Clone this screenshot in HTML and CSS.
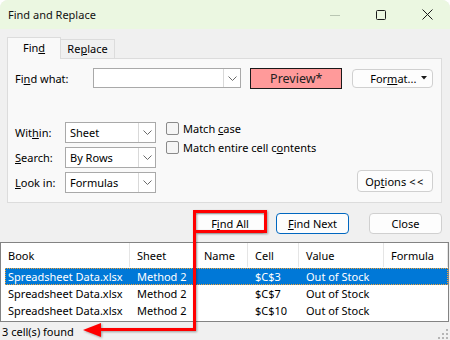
FILE: index.html
```html
<!DOCTYPE html>
<html>
<head>
<meta charset="utf-8">
<title>Find and Replace</title>
<link rel="stylesheet" href="styles.css">
</head>
<body>
<div class="window">
  <div class="titlebar">
    <span class="title">Find and Replace</span>
    <div class="controls">
      <span class="cap"><svg width="10" height="10" viewBox="0 0 10 10"><line x1="0" y1="5.5" x2="10" y2="5.5" stroke="#b9c6b3" stroke-width="1"/></svg></span>
      <span class="cap"><svg width="10" height="10" viewBox="0 0 10 10"><rect x="0.5" y="0.5" width="9" height="9" rx="1" fill="none" stroke="#1a1a1a" stroke-width="1"/></svg></span>
      <span class="cap"><svg width="11" height="11" viewBox="0 0 11 11"><path d="M0.5 0.5 L10.5 10.5 M10.5 0.5 L0.5 10.5" stroke="#1a1a1a" stroke-width="1"/></svg></span>
    </div>
  </div>

  <div class="tabs">
    <div class="tab active">Fin<u>d</u></div>
    <div class="tab">Re<u>p</u>lace</div>
  </div>

  <div class="panel">
    <div class="row-find">
      <span class="lbl-find">Fi<u>n</u>d what:</span>
      <div class="combo combo-wide">
        <span class="combo-text"></span>
        <span class="combo-btn"><svg width="9" height="5" viewBox="0 0 9 5"><path d="M0.5 0.5 L4.5 4.5 L8.5 0.5" fill="none" stroke="#6a6a6a" stroke-width="1"/></svg></span>
      </div>
      <div class="preview">Preview*</div>
      <div class="btn btn-format"><span>For<u>m</u>at...</span><svg class="tri" width="6" height="4" viewBox="0 0 6 4"><path d="M0 0 H6 L3 3.5 Z" fill="#1a1a1a"/></svg></div>
    </div>

    <div class="row-opts">
      <div class="selects">
        <div class="sel-row">
          <span class="lbl">Wit<u>h</u>in:</span>
          <div class="combo combo-sel">
            <span class="combo-text">Sheet</span>
            <span class="combo-btn"><svg width="9" height="5" viewBox="0 0 9 5"><path d="M0.5 0.5 L4.5 4.5 L8.5 0.5" fill="none" stroke="#6a6a6a" stroke-width="1"/></svg></span>
          </div>
        </div>
        <div class="sel-row">
          <span class="lbl"><u>S</u>earch:</span>
          <div class="combo combo-sel">
            <span class="combo-text">By Rows</span>
            <span class="combo-btn"><svg width="9" height="5" viewBox="0 0 9 5"><path d="M0.5 0.5 L4.5 4.5 L8.5 0.5" fill="none" stroke="#6a6a6a" stroke-width="1"/></svg></span>
          </div>
        </div>
        <div class="sel-row">
          <span class="lbl"><u>L</u>ook in:</span>
          <div class="combo combo-sel">
            <span class="combo-text">Formulas</span>
            <span class="combo-btn"><svg width="9" height="5" viewBox="0 0 9 5"><path d="M0.5 0.5 L4.5 4.5 L8.5 0.5" fill="none" stroke="#6a6a6a" stroke-width="1"/></svg></span>
          </div>
        </div>
      </div>

      <div class="checks">
        <div class="check"><span class="box"></span><span>Match <u>c</u>ase</span></div>
        <div class="check"><span class="box"></span><span>Match entire cell c<u>o</u>ntents</span></div>
      </div>

      <div class="btn btn-options">Op<u>t</u>ions <span class="lt">&lt;&lt;</span></div>
    </div>
  </div>

  <div class="actions">
    <div class="btn btn-act btn-findall">F<u>i</u>nd All</div>
    <div class="btn btn-act btn-findnext"><u>F</u>ind Next</div>
    <div class="btn btn-act btn-close">Close</div>
  </div>

  <div class="results">
    <div class="res-head">
      <span class="hc">Book</span>
      <span class="hc">Sheet</span>
      <span class="hc">Name</span>
      <span class="hc">Cell</span>
      <span class="hc">Value</span>
      <span class="hc">Formula</span>
    </div>
    <div class="res-body">
      <div class="res-row selected">
        <span class="c">Spreadsheet Data.xlsx</span><span class="c">Method 2</span><span class="c"></span><span class="c">$C$3</span><span class="c">Out of Stock</span><span class="c"></span>
      </div>
      <div class="res-row">
        <span class="c">Spreadsheet Data.xlsx</span><span class="c">Method 2</span><span class="c"></span><span class="c">$C$7</span><span class="c">Out of Stock</span><span class="c"></span>
      </div>
      <div class="res-row">
        <span class="c">Spreadsheet Data.xlsx</span><span class="c">Method 2</span><span class="c"></span><span class="c">$C$10</span><span class="c">Out of Stock</span><span class="c"></span>
      </div>
    </div>
  </div>

  <div class="status">
    <span>3 cell(s) found</span>
    <svg class="grip" width="10" height="10" viewBox="0 0 10 10">
      <rect x="8" y="0" width="2" height="2" fill="#b5b5b5"/>
      <rect x="4" y="4" width="2" height="2" fill="#b5b5b5"/>
      <rect x="8" y="4" width="2" height="2" fill="#b5b5b5"/>
      <rect x="0" y="8" width="2" height="2" fill="#b5b5b5"/>
      <rect x="4" y="8" width="2" height="2" fill="#b5b5b5"/>
      <rect x="8" y="8" width="2" height="2" fill="#b5b5b5"/>
    </svg>
  </div>

  <svg class="annot" width="450" height="340" viewBox="0 0 450 340">
    <g class="annot-shadow">
      <rect x="194.5" y="211.5" width="71" height="20" fill="none" stroke="#ff0000" stroke-width="3"/>
      <polyline points="194.5,233 194.5,329.5 99,329.5" fill="none" stroke="#ff0000" stroke-width="3"/>
      <polygon points="83,330 101,323 101,337" fill="#ff0000"/>
    </g>
  </svg>
</div>
</body>
</html>
```

FILE: styles.css
```css
* {
  box-sizing: border-box;
  margin: 0;
  padding: 0;
}

html {
  background: #ffffff;
}

body {
  width: 450px;
  height: 340px;
  overflow: hidden;
  font-family: "Noto Sans", "DejaVu Sans", sans-serif;
  font-size: 11px;
  color: #000;
}

u {
  text-decoration: underline;
  text-underline-offset: 1px;
}

.window {
  position: relative;
  width: 450px;
  height: 340px;
  background: #f0f0f0;
  border-radius: 8px 8px 0 0;
  overflow: hidden;
}

/* Title bar */
.titlebar {
  height: 29px;
  background: #ebf7e1;
  display: flex;
  align-items: center;
  padding-left: 8px;
}

.title {
  font-size: 11px;
  color: #111;
}

.controls {
  margin-left: auto;
  display: flex;
  height: 29px;
}

.cap {
  width: 46px;
  height: 29px;
  display: flex;
  align-items: center;
  justify-content: center;
}

/* Tabs */
.tabs {
  height: 29px;
  display: flex;
  align-items: flex-end;
  padding-left: 7px;
}

.tab {
  width: 54px;
  height: 19px;
  border: 1px solid #dcdcdc;
  border-bottom: none;
  border-left: none;
  background: #f0f0f0;
  text-align: center;
  line-height: 17px;
}

.tab.active {
  position: relative;
  z-index: 1;
  height: 22px;
  margin-bottom: -1px;
  border-left: 1px solid #dcdcdc;
  background: #f9f9f9;
  line-height: 20px;
}

/* Panel */
.panel {
  margin-left: 7px;
  width: 435px;
  border: 1px solid #dcdcdc;
  background: #f9f9f9;
  padding: 9px 8px 9px 7px;
}

.row-find {
  display: flex;
  align-items: center;
  height: 20px;
}

.lbl-find {
  width: 78px;
}

.combo {
  display: flex;
  background: #fff;
  border: 1px solid #a9a9a9;
}

.combo-text {
  flex: 1;
  padding-left: 4px;
  display: flex;
  align-items: center;
}

.combo-btn {
  width: 17px;
  border-left: 1px solid #d9d9d9;
  display: flex;
  align-items: center;
  justify-content: center;
}

.combo-wide {
  width: 149px;
  height: 20px;
}

.preview {
  margin-left: 9px;
  width: 92px;
  height: 21px;
  background: #ff9a9a;
  border: 1px solid #1a1a1a;
  font-size: 12.5px;
  color: #222;
  display: flex;
  align-items: center;
  justify-content: center;
}

.btn {
  background: #fdfdfd;
  border: 1px solid #d0d0d0;
  border-radius: 4px;
  display: flex;
  align-items: center;
  justify-content: center;
}

.btn-format {
  margin-left: 10px;
  width: 81px;
  height: 19px;
  justify-content: flex-start;
  padding-left: 17px;
}

.btn-format .tri {
  margin-left: auto;
  margin-right: 5px;
}

.row-opts {
  display: flex;
  align-items: flex-start;
  margin-top: 34px;
}

.selects {
  display: flex;
  flex-direction: column;
  gap: 4px;
}

.sel-row {
  display: flex;
  align-items: center;
  height: 21px;
}

.lbl {
  width: 50px;
}

.combo-sel {
  width: 91px;
  height: 21px;
}

.checks {
  margin-left: 10px;
  display: flex;
  flex-direction: column;
  gap: 6px;
}

.check {
  display: flex;
  align-items: center;
  height: 13px;
  gap: 4px;
}

.box {
  width: 13px;
  height: 13px;
  border: 1px solid #8a8a8a;
  border-radius: 2px;
  background: #f5f5f5;
}

.btn-options {
  margin-left: auto;
  align-self: flex-end;
  margin-bottom: 1px;
  width: 76px;
  height: 22px;
}

.btn-options .lt {
  letter-spacing: 1.5px;
  margin-left: 3px;
}

/* Action buttons */
.actions {
  display: flex;
  justify-content: flex-end;
  padding-right: 8px;
  margin-top: 10px;
  height: 21px;
}

.btn-act {
  width: 73px;
  height: 21px;
}

.btn-findall {
  width: 72px;
}

.btn-findnext {
  margin-left: 10px;
  border-color: #0067c0;
}

.btn-close {
  margin-left: 20px;
}

/* Results list */
.results {
  margin-top: 8px;
  width: 449px;
  height: 80px;
  background: #fff;
  border: 1px solid #838383;
}

.res-head {
  display: grid;
  grid-template-columns: 129px 67px 51px 51px 85px 1fr;
  height: 24px;
}

.hc {
  display: flex;
  align-items: center;
  padding-left: 7px;
  border-right: 1px solid #e5e5e5;
}

.res-body {
  padding-top: 1px;
  padding-left: 4px;
}

.res-row {
  display: grid;
  grid-template-columns: 125px 67px 51px 51px 85px 1fr;
  height: 17px;
  align-items: center;
}

.res-row .c {
  padding-left: 7px;
  white-space: nowrap;
}

.res-row .c:first-child {
  padding-left: 3px;
}

.res-row.selected {
  background: #0078d7;
  color: #fff;
  outline: 1px dotted #f2a33a;
  outline-offset: -1px;
}

/* Status */
.status {
  height: 19px;
  display: flex;
  align-items: center;
  padding-left: 2px;
}

.grip {
  margin-left: auto;
  margin-right: 2px;
  align-self: flex-end;
  margin-bottom: 2px;
}

/* Annotation overlay */
.annot {
  position: absolute;
  left: 0;
  top: 0;
  pointer-events: none;
}

.annot-shadow {
  filter: drop-shadow(1px 1px 1px rgba(0, 0, 0, 0.35));
}
```
